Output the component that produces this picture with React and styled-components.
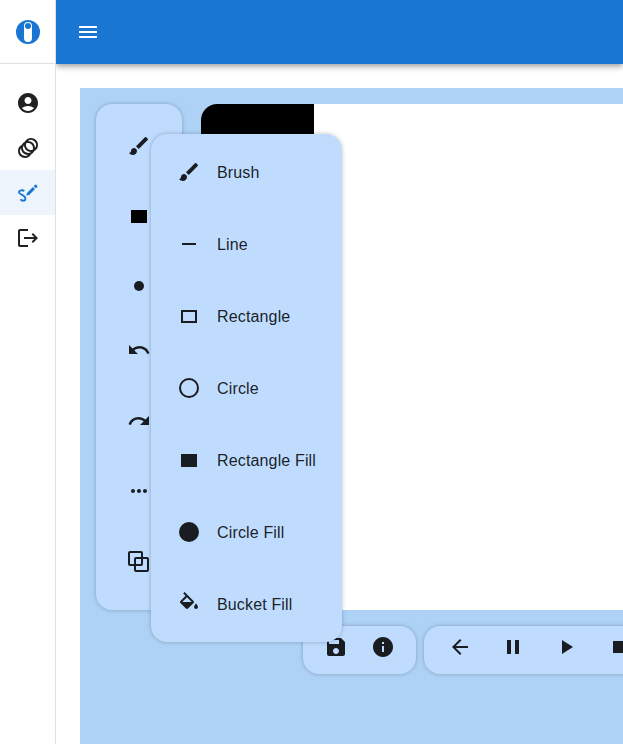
import React from "react";
import styled, { createGlobalStyle } from "styled-components";
import {
  MdAccountCircle, MdAnimation, MdLogout, MdMenu, MdBrush, MdRemove, MdUndo, MdRedo,
  MdMoreHoriz, MdSave, MdInfo, MdArrowBack, MdPause, MdPlayArrow, MdStop,
} from "react-icons/md";

const GlobalStyle = createGlobalStyle`
  * { box-sizing: border-box; }
  body {
    margin: 0;
    overflow: hidden;
    background: #fff;
    color: rgba(0, 0, 0, 0.87);
    font: 16px/24px "Liberation Sans", Arial, sans-serif;
    letter-spacing: 0.15px;
  }
  svg { display: block; flex: none; }
`;

const Shell = styled.div`
  display: flex;
  width: 100vw;
  height: 100vh;
  overflow: hidden;
`;

const Sidebar = styled.aside`
  flex: none;
  width: 56px;
  border-right: 1px solid #e0e0e0;
`;

const LogoBox = styled.div`
  height: 64px;
  padding: 20px 0 0 16px;
  border-bottom: 1px solid #e0e0e0;
`;

const Nav = styled.nav`
  padding-top: 16px;
`;

const NavItem = styled.a`
  display: flex;
  align-items: center;
  height: 45px;
  padding-left: 16px;
  color: ${(p) => (p.$active ? "#1976d2" : "rgba(0, 0, 0, 0.87)")};
  background: ${(p) => (p.$active ? "#edf4fc" : "transparent")};
`;

const Main = styled.div`
  display: flex;
  flex: 1;
  flex-direction: column;
  min-width: 0;
`;

const AppBar = styled.header`
  display: flex;
  flex: none;
  align-items: center;
  height: 64px;
  padding-left: 20px;
  color: #fff;
  background: #1976d2;
  box-shadow: 0 2px 4px -1px rgba(0, 0, 0, 0.2), 0 4px 5px rgba(0, 0, 0, 0.14),
    0 1px 10px rgba(0, 0, 0, 0.12);
  clip-path: inset(0 0 -20px 0);
`;

const Workspace = styled.main`
  display: flex;
  flex: 1;
  flex-direction: column;
  gap: 16px;
  margin: 24px 0 0 24px;
  padding: 16px 0 0 16px;
  background: #aed2f6;
`;

const EditorRow = styled.div`
  display: flex;
  gap: 19px;
  height: 506px;
`;

const Panel = styled.div`
  background: #bfdbfe;
  border-radius: 16px;
  box-shadow: 0 0 4px rgba(0, 0, 0, 0.25);
`;

const ToolPanel = styled(Panel)`
  position: relative;
  display: flex;
  flex: none;
  flex-direction: column;
  align-items: center;
  width: 86px;
  padding-top: 7px;
`;

const ToolButton = styled.button`
  display: flex;
  align-items: center;
  justify-content: center;
  width: 86px;
  height: ${(p) => p.$height || 70}px;
  padding: 0;
  border: 0;
  color: inherit;
  background: none;
`;

const Canvas = styled.div`
  flex: 1;
  overflow: hidden;
  background: #fff;
  border-radius: 16px 0 0 0;
`;

const Stroke = styled.div`
  width: 113px;
  height: 60px;
  background: #000;
`;

const Menu = styled(Panel)`
  position: absolute;
  z-index: 2;
  top: 30px;
  left: 55px;
  width: 191px;
  height: 508px;
  padding-top: 2px;
`;

const MenuItem = styled.div`
  display: flex;
  align-items: center;
  gap: 16px;
  height: 72px;
  padding-left: 26px;
  white-space: nowrap;
`;

const MenuLabel = styled.span`
  padding-top: 2px;
`;

const Controls = styled.div`
  display: flex;
  gap: 8px;
  height: 48px;
  padding-left: 207px;
`;

const ControlGroup = styled(Panel)`
  display: flex;
  flex: none;
  align-items: flex-start;
  gap: ${(p) => p.$gap}px;
  width: ${(p) => p.$width}px;
  padding: 9px 0 0 ${(p) => p.$inset}px;
`;

const Icon = ({ children, ...rest }) => (
  <svg width="24" height="24" viewBox="0 0 24 24" fill="none" stroke="currentColor" strokeWidth="2" {...rest}>
    {children}
  </svg>
);

const Logo = () => (
  <Icon stroke="none">
    <circle cx="12" cy="12" r="12" fill="#1976d2" />
    <rect x="8" y="2" width="8" height="20" rx="4" fill="#fff" />
    <circle cx="12" cy="6" r="3" fill="#1976d2" />
  </Icon>
);

const SketchIcon = () => (
  <Icon>
    <path d="M8.2 10.2C6.6 8.4 2.9 9.3 2.9 11.2C3 13.4 9.4 14.2 9.4 17.4C9.4 20.3 5.8 20.3 4.6 18.2" strokeWidth="1.9" />
    <path d="M10.2 14.6L11 11.9L16.9 6L19 8.1L13.1 14zM17.7 5.2L19.1 3.8Q19.7 3.2 20.3 3.8L21.2 4.7Q21.8 5.3 21.2 5.9L19.8 7.3z" fill="currentColor" stroke="none" />
  </Icon>
);

const RectIcon = ({ filled, color = "currentColor" }) => (
  <Icon stroke="none" shapeRendering="crispEdges">
    {filled ? (
      <rect x="4" y="6" width="16" height="13" fill={color} />
    ) : (
      <path d="M4 6h16v13H4zM6 8v9h12V8z" fill={color} fillRule="evenodd" />
    )}
  </Icon>
);

const CircleIcon = () => (
  <Icon>
    <circle cx="12" cy="12" r="9" />
  </Icon>
);

const DiscIcon = ({ r = 10 }) => (
  <Icon stroke="none">
    <circle cx="12" cy="12" r={r} fill="currentColor" />
  </Icon>
);

const BucketIcon = () => (
  <Icon fill="currentColor" stroke="none">
    <path d="M16.56 8.94L7.62 0 6.21 1.41l2.38 2.38-5.15 5.15c-.59.59-.59 1.54 0 2.12l5.5 5.5c.29.29.68.44 1.06.44s.77-.15 1.06-.44l5.5-5.5c.59-.58.59-1.53 0-2.12zM5.21 10L10 5.21 14.79 10H5.21zM19 11.5s-2 2.17-2 3.5c0 1.1.9 2 2 2s2-.9 2-2c0-1.33-2-3.5-2-3.5z" />
  </Icon>
);

const OverlapIcon = () => (
  <Icon>
    <path d="M3 3h11a1 1 0 0 1 1 1v11a1 1 0 0 1-1 1H3a1 1 0 0 1-1-1V4a1 1 0 0 1 1-1zM9 9h11a1 1 0 0 1 1 1v11a1 1 0 0 1-1 1H9a1 1 0 0 1-1-1V10a1 1 0 0 1 1-1z" />
  </Icon>
);

const navigation = [
  { name: "account", icon: <MdAccountCircle size={24} /> },
  { name: "animations", icon: <MdAnimation size={24} /> },
  { name: "sketch", icon: <SketchIcon />, active: true },
  { name: "logout", icon: <MdLogout size={24} /> },
];

const tools = [
  { name: "brush", icon: <MdBrush size={24} /> },
  { name: "color", icon: <RectIcon filled color="#000" /> },
  { name: "size", icon: <DiscIcon r={5} /> },
  { name: "undo", icon: <MdUndo size={24} />, height: 58 },
  { name: "redo", icon: <MdRedo size={24} />, height: 84 },
  { name: "more", icon: <MdMoreHoriz size={24} />, height: 56 },
  { name: "copy", icon: <OverlapIcon />, height: 84 },
];

const shapes = [
  ["Brush", <MdBrush size={24} />],
  ["Line", <MdRemove size={24} />],
  ["Rectangle", <RectIcon />],
  ["Circle", <CircleIcon />],
  ["Rectangle Fill", <RectIcon filled />],
  ["Circle Fill", <DiscIcon />],
  ["Bucket Fill", <BucketIcon />],
];

export default function App() {
  return (
    <>
      <GlobalStyle />
      <Shell>
        <Sidebar>
          <LogoBox><Logo /></LogoBox>
          <Nav>
            {navigation.map(({ name, icon, active }) => (
              <NavItem key={name} aria-label={name} $active={active}>{icon}</NavItem>
            ))}
          </Nav>
        </Sidebar>
        <Main>
          <AppBar><MdMenu size={24} /></AppBar>
          <Workspace>
            <EditorRow>
              <ToolPanel>
                {tools.map(({ name, icon, height }) => (
                  <ToolButton key={name} aria-label={name} $height={height}>{icon}</ToolButton>
                ))}
                <Menu>
                  {shapes.map(([label, icon]) => (
                    <MenuItem key={label}>{icon}<MenuLabel>{label}</MenuLabel></MenuItem>
                  ))}
                </Menu>
              </ToolPanel>
              <Canvas><Stroke /></Canvas>
            </EditorRow>
            <Controls>
              <ControlGroup $width={113} $gap={23} $inset={21}>
                <MdSave size={24} />
                <MdInfo size={24} />
              </ControlGroup>
              <ControlGroup $width={300} $gap={29} $inset={24}>
                <MdArrowBack size={24} />
                <MdPause size={24} />
                <MdPlayArrow size={24} />
                <MdStop size={24} />
              </ControlGroup>
            </Controls>
          </Workspace>
        </Main>
      </Shell>
    </>
  );
}
